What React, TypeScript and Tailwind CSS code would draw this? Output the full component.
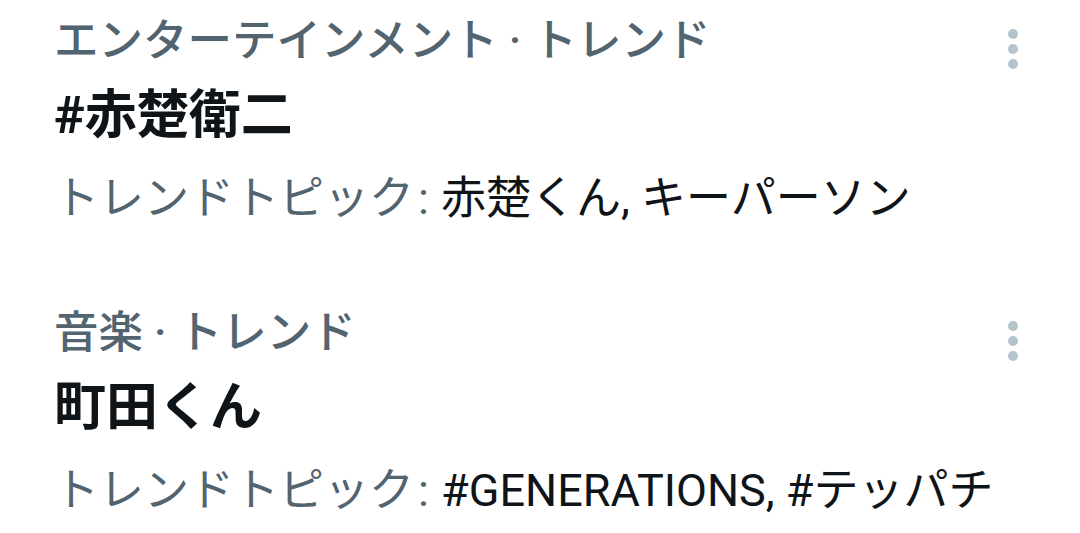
import { useState } from 'react';

interface Trend {
  category: string;
  title: string;
  topics: string;
}

const trends: Trend[] = [
  {
    category: 'エンターテインメント · トレンド',
    title: '#赤楚衛二',
    topics: '赤楚くん, キーパーソン',
  },
  {
    category: '音楽 · トレンド',
    title: '町田くん',
    topics: '#GENERATIONS, #テッパチ',
  },
];

function MoreDots() {
  return (
    <div className="flex flex-col items-center gap-[5px] pt-[14px]">
      <span className="w-[10px] h-[10px] rounded-full bg-[#b4c3cc]" />
      <span className="w-[10px] h-[10px] rounded-full bg-[#b4c3cc]" />
      <span className="w-[10px] h-[10px] rounded-full bg-[#b4c3cc]" />
    </div>
  );
}

export default function App() {
  const [active, setActive] = useState<number | null>(null);

  return (
    <main
      className="w-[1080px] h-[533px] bg-white overflow-hidden pt-[15px]"
      style={{ fontFamily: 'Roboto, "Noto Sans CJK JP", sans-serif' }}
    >
      <div className="flex flex-col gap-[80px]">
        {trends.map((t, idx) => (
          <div
            key={idx}
            onClick={() => setActive(active === idx ? null : idx)}
            className="flex justify-between pl-[54px] pr-[62px]"
          >
            <div className="flex flex-col">
              {/* Category */}
              <div className="h-[52px] leading-[52px] text-[44.5px] font-medium text-[#536471] whitespace-nowrap">
                {t.category}
              </div>

              {/* Title */}
              <div className="h-[60px] leading-[60px] mt-[19px] text-[52px] font-bold text-[#0f1419] whitespace-nowrap">
                {t.title}
              </div>

              {/* Topics */}
              <div className="h-[56px] leading-[56px] mt-[25px] text-[45px] whitespace-nowrap">
                <span className="text-[#536471]">トレンドトピック<span className="ml-[4px]">:</span> </span>
                <span className="text-[#0f1419] ml-[1px]">{t.topics}</span>
              </div>
            </div>

            <MoreDots />
          </div>
        ))}
      </div>
    </main>
  );
}
